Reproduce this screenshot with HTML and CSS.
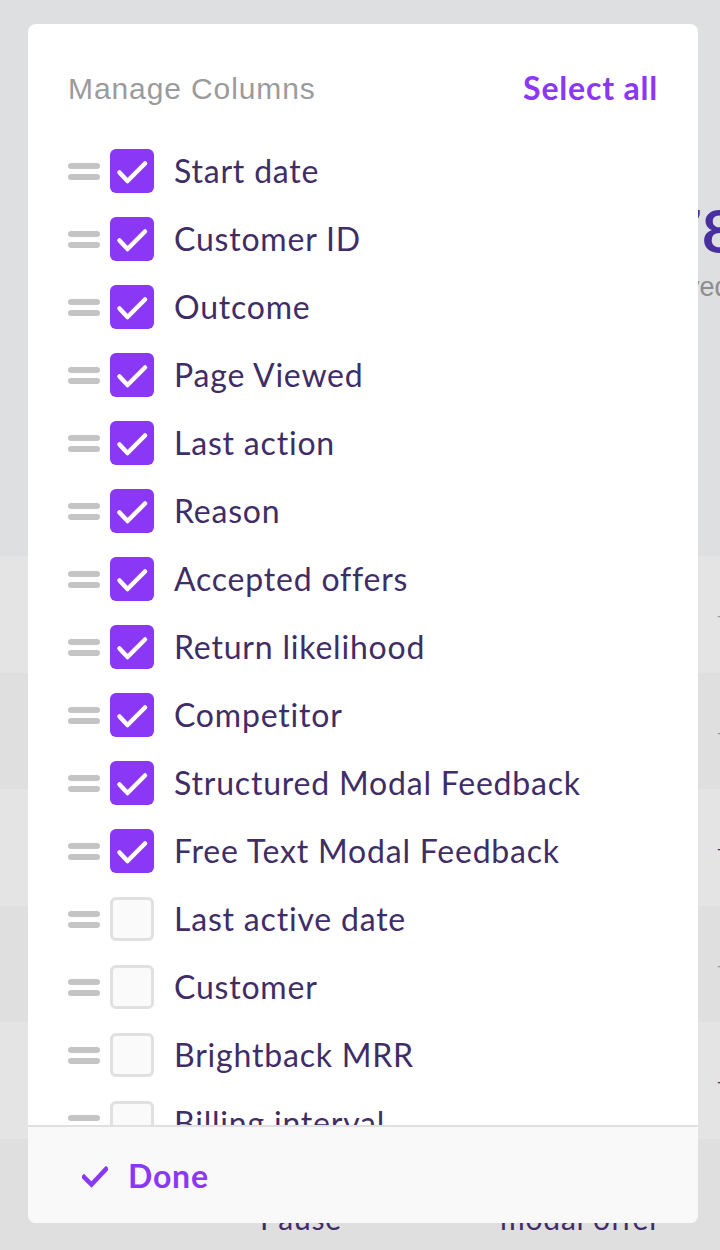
FILE: index.html
```html
<!DOCTYPE html>
<html>
<head>
<meta charset="utf-8">
<link rel="stylesheet" href="styles.css">
</head>
<body>
<div class="page">
  <div class="page-top">
    <div class="stat">
      <div class="stat-value">78</div>
      <div class="stat-label">Saved</div>
    </div>
  </div>
  <div class="table">
    <div class="trow light"><span class="cell c-right g">–</span></div>
    <div class="trow dark"><span class="cell c-right g">–</span></div>
    <div class="trow light"><span class="cell c-right d">–</span></div>
    <div class="trow dark"><span class="cell c-right g">–</span></div>
    <div class="trow light"><span class="cell c-right d">–</span></div>
    <div class="trow dark">
      <div class="cells">
        <span class="cell c1">Offer<br>Pause</span>
        <span class="cell c2">Accepted<br>modal offer</span>
      </div>
    </div>
  </div>
</div>

<div class="modal">
  <div class="modal-head">
    <span class="title">Manage Columns</span>
    <span class="select-all">Select all</span>
  </div>
  <div class="list">
    <div class="item"><span class="handle"><i></i><i></i></span><span class="box on"><svg viewBox="0 0 44 44"><path d="M9.5 23.5 L17.5 32 L35 14.5"/></svg></span><span class="label">Start date</span></div>
    <div class="item"><span class="handle"><i></i><i></i></span><span class="box on"><svg viewBox="0 0 44 44"><path d="M9.5 23.5 L17.5 32 L35 14.5"/></svg></span><span class="label">Customer ID</span></div>
    <div class="item"><span class="handle"><i></i><i></i></span><span class="box on"><svg viewBox="0 0 44 44"><path d="M9.5 23.5 L17.5 32 L35 14.5"/></svg></span><span class="label">Outcome</span></div>
    <div class="item"><span class="handle"><i></i><i></i></span><span class="box on"><svg viewBox="0 0 44 44"><path d="M9.5 23.5 L17.5 32 L35 14.5"/></svg></span><span class="label">Page Viewed</span></div>
    <div class="item"><span class="handle"><i></i><i></i></span><span class="box on"><svg viewBox="0 0 44 44"><path d="M9.5 23.5 L17.5 32 L35 14.5"/></svg></span><span class="label">Last action</span></div>
    <div class="item"><span class="handle"><i></i><i></i></span><span class="box on"><svg viewBox="0 0 44 44"><path d="M9.5 23.5 L17.5 32 L35 14.5"/></svg></span><span class="label">Reason</span></div>
    <div class="item"><span class="handle"><i></i><i></i></span><span class="box on"><svg viewBox="0 0 44 44"><path d="M9.5 23.5 L17.5 32 L35 14.5"/></svg></span><span class="label">Accepted offers</span></div>
    <div class="item"><span class="handle"><i></i><i></i></span><span class="box on"><svg viewBox="0 0 44 44"><path d="M9.5 23.5 L17.5 32 L35 14.5"/></svg></span><span class="label">Return likelihood</span></div>
    <div class="item"><span class="handle"><i></i><i></i></span><span class="box on"><svg viewBox="0 0 44 44"><path d="M9.5 23.5 L17.5 32 L35 14.5"/></svg></span><span class="label">Competitor</span></div>
    <div class="item"><span class="handle"><i></i><i></i></span><span class="box on"><svg viewBox="0 0 44 44"><path d="M9.5 23.5 L17.5 32 L35 14.5"/></svg></span><span class="label">Structured Modal Feedback</span></div>
    <div class="item"><span class="handle"><i></i><i></i></span><span class="box on"><svg viewBox="0 0 44 44"><path d="M9.5 23.5 L17.5 32 L35 14.5"/></svg></span><span class="label">Free Text Modal Feedback</span></div>
    <div class="item"><span class="handle"><i></i><i></i></span><span class="box"></span><span class="label">Last active date</span></div>
    <div class="item"><span class="handle"><i></i><i></i></span><span class="box"></span><span class="label">Customer</span></div>
    <div class="item"><span class="handle"><i></i><i></i></span><span class="box"></span><span class="label">Brightback MRR</span></div>
    <div class="item"><span class="handle"><i></i><i></i></span><span class="box"></span><span class="label">Billing interval</span></div>
  </div>
  <div class="modal-foot">
    <svg class="done-check" viewBox="0 0 26 22"><path d="M2 11 L9.5 18.5 L24 3"/></svg>
    <span class="done">Done</span>
  </div>
</div>
</body>
</html>
```
FILE: styles.css
```css
html, body {
  margin: 0;
  padding: 0;
}
body {
  width: 720px;
  height: 1250px;
  overflow: hidden;
  position: relative;
  background: #dedfe0;
  font-family: Lato, "Noto Sans", sans-serif;
}
.page {
  width: 720px;
}
.page-top {
  height: 556px;
  background: #dedfe0;
  padding-top: 198px;
  box-sizing: border-box;
}
.stat {
  padding-left: 667px;
}
.stat-value {
  font-family: Lato, sans-serif;
  font-weight: 700;
  font-size: 60px;
  line-height: 64px;
  color: #4a2fa0;
  white-space: nowrap;
}
.stat-label {
  font-family: "Liberation Sans", sans-serif;
  font-size: 27px;
  line-height: 34px;
  margin-top: 8px;
  margin-left: -14px;
  color: #8d8d8f;
  white-space: nowrap;
}
.table {
  display: flex;
  flex-direction: column;
}
.trow {
  height: 116.5px;
  position: relative;
  display: flex;
  align-items: center;
}
.trow.light { background: #e4e4e4; }
.trow.dark { background: #dfdfdf; }
.cell {
  font-size: 26px;
  color: #3f2d66;
}
.c-right {
  margin-left: 716px;
  font-size: 20px;
}
.c-right.g { color: #9a9a9a; }
.c-right.d { color: #3f2d66; }
.cells {
  display: flex;
  padding-left: 260px;
  font-size: 30px;
  line-height: 36px;
  margin-top: 6px;
}
.cells .cell {
  font-size: 30px;
  letter-spacing: 0.8px;
}
.c1 {
  width: 240px;
}
.modal {
  position: absolute;
  left: 28px;
  top: 24px;
  width: 670px;
  height: 1199px;
  background: #ffffff;
  border-radius: 8px;
  overflow: hidden;
  display: flex;
  flex-direction: column;
}
.modal-head {
  display: flex;
  justify-content: space-between;
  align-items: center;
  padding: 48px 40px 31px 40px;
  height: 34px;
  flex: none;
}
.title {
  font-family: "Liberation Sans", sans-serif;
  font-size: 30px;
  letter-spacing: 0.9px;
  color: #9b9b9b;
}
.select-all {
  font-family: Lato, sans-serif;
  font-weight: 700;
  font-size: 32px;
  letter-spacing: 0.8px;
  color: #8a38f5;
  margin-top: -3px;
}
.list {
  flex: 1;
  overflow: hidden;
  padding: 0 40px;
}
.item {
  height: 68px;
  display: flex;
  align-items: center;
}
.handle {
  width: 32px;
  display: flex;
  flex-direction: column;
  gap: 5px;
  margin-right: 10px;
}
.handle i {
  display: block;
  height: 6px;
  border-radius: 3px;
  background: #c4c4c4;
}
.box {
  width: 44px;
  height: 44px;
  border-radius: 6px;
  box-sizing: border-box;
  border: 3px solid #e0e0e0;
  background: #fafafa;
  margin-right: 20px;
  flex: none;
}
.box.on {
  border: none;
  background: #8a38f5;
}
.box svg {
  width: 44px;
  height: 44px;
  display: block;
}
.box svg path {
  fill: none;
  stroke: #ffffff;
  stroke-width: 4.5;
  stroke-linecap: round;
  stroke-linejoin: round;
}
.label {
  font-size: 32px;
  letter-spacing: 0.8px;
  color: #3f2d66;
  white-space: nowrap;
  margin-top: -2px;
}
.modal-foot {
  flex: none;
  height: 96px;
  border-top: 2px solid #e0e0e0;
  background: #f9f9f9;
  display: flex;
  align-items: center;
  padding-left: 54px;
  gap: 20px;
}
.done-check {
  width: 26px;
  height: 22px;
  margin-top: 4px;
}
.done-check path {
  fill: none;
  stroke: #8a38f5;
  stroke-width: 4.5;
  stroke-linecap: square;
}
.done {
  font-family: Lato, sans-serif;
  font-weight: 700;
  font-size: 32px;
  letter-spacing: 0.8px;
  color: #8a38f5;
}
```
